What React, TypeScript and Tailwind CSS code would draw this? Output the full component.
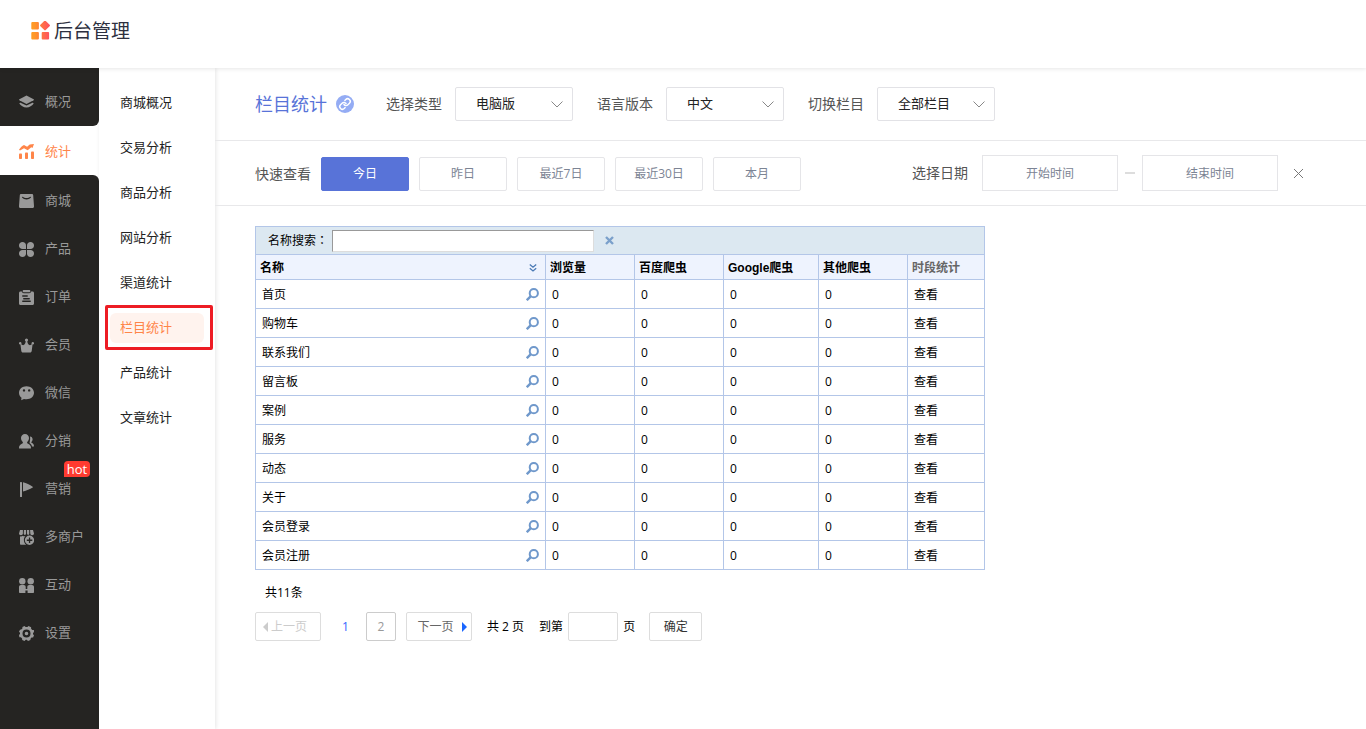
import { useState } from "react";
import type { ReactNode } from "react";

interface Column {
    label: string,
    className: string
}

const iconClass: string = "w-[15px] h-[15px] shrink-0";

const Icon = ({ children }: { children: ReactNode }) => (
    <svg className={iconClass} viewBox="0 0 15 15" fill="currentColor" aria-hidden="true">{children}</svg>
);

const icons: Record<string, ReactNode> = {
    概况: <>
        <path d="M7.5.5 14.600 4.200c.5.300.5.800 0 1.100L7.500 9 .4 5.300c-.5-.3-.5-.8 0-1.100z" />
        <path d="M.8 7.900c.4-.3.800-.2 1.200 0l5.500 2.600L13 7.900c.4-.2.800-.3 1.200 0 .4.300.5.800.1 1.200-1.300 1.600-3.600 3.500-6.800 3.500S2 10.700.7 9.100c-.4-.4-.3-.9.1-1.200z" />
    </>,
    统计: <>
        <path d="M0 5.800C1.500 3.700 3.200 1.900 5 1.100l3.100 1.700L10.700.4l4.300-.3-1.500 3.900-1.200-.7-3.600 3-3.700-2L1 6.400z" />
        <rect x="0" y="9.600" width="3" height="5.400" rx=".8" />
        <rect x="6" y="8.600" width="3" height="6.400" rx=".8" />
        <rect x="12" y="7.600" width="3" height="7.400" rx=".8" />
    </>,
    商城: <path fillRule="evenodd" d="M2.200 0h10.600c.8 0 1.300.5 1.400 1.200L15 12c.1 1.100-.6 2-1.800 2H1.800C.6 14-.1 13.100 0 12L.8 1.200C.9.500 1.400 0 2.200 0zM3.600 2.700c-.6-.1-.8.5-.5.900 1 1.300 2.600 2 4.400 2s3.400-.7 4.400-2c.3-.4.1-1-.5-.9-1.200.7-2.500 1.400-3.900 1.400S4.800 3.400 3.600 2.700z" />,
    产品: <>
        <path d="M3.500 0C5.500 0 7 1.500 7 3.500V7H3.500C1.500 7 0 5.500 0 3.500S1.500 0 3.500 0z" />
        <path d="M11.500 0C13.500 0 15 1.500 15 3.500S13.500 7 11.500 7H8V3.500C8 1.500 9.500 0 11.500 0z" />
        <path d="M3.500 8H7v3.500C7 13.500 5.500 15 3.500 15S0 13.500 0 11.500 1.500 8 3.500 8z" />
        <path d="M8 8h3.500c2 0 3.500 1.500 3.500 3.500S13.500 15 11.500 15 8 13.500 8 11.500z" />
    </>,
    订单: <>
        <path d="M4.500 0h6c.5 0 .8.300.8.800v.7c0 .5-.3.800-.8.800h-6c-.5 0-.8-.3-.8-.8V.8c0-.5.3-.8.800-.8z" />
        <path fillRule="evenodd" d="M1.500 1.500H3c.1 1.200.7 1.700 1.800 1.700h5.400c1.100 0 1.700-.5 1.800-1.700h1.500c.9 0 1.500.6 1.500 1.500v10.500c0 .9-.6 1.500-1.500 1.500h-12C.6 15 0 14.400 0 13.500V3c0-.9.6-1.500 1.500-1.500zM3.700 5.300c-.8 0-.8 1.500 0 1.500h4.600c.8 0 .8-1.500 0-1.500zm1 2.700c-.8 0-.8 1.400 0 1.400h5.600c.8 0 .8-1.400 0-1.400zm-1 2.600c-.8 0-.8 1.500 0 1.500h7.600c.8 0 .8-1.500 0-1.500z" />
    </>,
    会员: <>
        <circle cx="7.5" cy="2" r="1.600" />
        <circle cx="1.200" cy="5.200" r="1.200" />
        <circle cx="13.800" cy="5.200" r="1.200" />
        <path d="M1.300 5.200c1.300 1.400 2.400 2.200 3.300 1.900C5.800 6.700 6.600 4.800 6.900 3h1.200c.3 1.800 1.100 3.700 2.300 4.100.9.300 2-.5 3.300-1.900l-1 7.800c-.1.900-.7 1.500-1.600 1.500H3.900c-.9 0-1.500-.6-1.600-1.500z" />
    </>,
    微信: <path fillRule="evenodd" d="M7.500.3c4.200 0 7.500 2.800 7.500 6.500s-3.300 6.500-7.500 6.500c-.9 0-1.700-.1-2.500-.3l-2.800 1.300.3-2.500C.9 10.600 0 8.800 0 6.800 0 3.100 3.300.3 7.500.3zM5 3.200a1.200 1.200 0 1 0 0 2.400 1.200 1.200 0 0 0 0-2.400zm5.200 0a1.200 1.200 0 1 0 0 2.400 1.200 1.200 0 0 0 0-2.400z" />,
    分销: <>
        <path d="M6 0c2.300 0 4 1.800 4 4.100 0 1.700-.8 3-1.800 3.900-.3.800.1 1.300.9 1.700 1.900.9 2.900 2.200 2.900 4.300 0 .4-.2.600-.6.600H.6c-.4 0-.6-.2-.6-.6 0-2.100 1-3.400 2.900-4.300.8-.4 1.200-.9.900-1.700C2.800 7.100 2 5.800 2 4.100 2 1.800 3.700 0 6 0z" />
        <path d="M11 2.500c1.500.1 2.600 1.300 2.600 2.800 0 1.200-.5 2-1.100 2.600-.3.600 0 .9.500 1.200 1.300.7 2 1.700 2 3.300h-2c-.4-1.500-1.200-2.500-2.500-3.300C10.800 7.300 11.500 5 11 2.500z" />
    </>,
    营销: <>
        <rect x="1" y="0" width="2" height="15" rx=".5" />
        <path d="M4 .3c3.300.7 6.700 2.400 9.700 4.400.4.300.4.700 0 .9-3 1.600-6 3-9.700 4z" />
    </>,
    多商户: <>
        <path d="M1 0h2.900v3.400c0 2.300-3.900 2.300-3.900 0zM4.900 0h2.200v3.600c0 1.700-2.400 1.700-2.400 0zM8 0h2.200l.1 3.600c0 1.700-2.300 1.700-2.300 0zM11.100 0H14l1 3.400c0 2.300-3.700 2.300-3.700 0z" />
        <path d="M1 6.300c1 .4 2 .1 2.800-.6.7.7 1.700.8 2.600.4C5.300 7.300 4.800 8.700 4.900 10.200c.1 1.900 1 3.600 2.400 4.600H1.800c-.5 0-.8-.3-.8-.8z" />
        <path fillRule="evenodd" d="M10.500 5.600a4.600 4.600 0 1 1 0 9.300 4.600 4.600 0 0 1 0-9.300zM9.900 7.600v2H7.800v1.300h2.100V13h1.300v-2.100h2.100V9.600h-2.100v-2z" />
    </>,
    互动: <>
        <circle cx="3.300" cy="3.200" r="3.200" />
        <circle cx="11.700" cy="3.200" r="3.200" />
        <path d="M2 7h2.700c1.400 0 2 .9 2 2.100H5.600V15H.8c-.5 0-.8-.3-.8-.8V9c0-1.200.8-2 2-2zM10.300 7H13c1.200 0 2 .8 2 2v5.200c0 .5-.3.800-.8.800H9.400V9.100H8.300c0-1.200.6-2.100 2-2.100z" />
        <path d="M5 9h1.700v2h1.600V9H10v6H8.600v-2.400H6.400V15H5z" />
    </>,
    设置: <path fillRule="evenodd" d="m5.500.1 1.100 1h1.800l1.100-1 2.600 1.100v1.500l1.200 1.200 1.600.1L15 6l-1 1v1.200l1 1-.9 2.300-1.600.1-1 1.200-.1 1.300-2.400.9-1.200-1.200H6.700L5.500 15l-2.300-1-.1-1.500-1.200-1.200-1.500-.1L0 9l1-1V6.800L0 5.700l1-2 1.200-.1 1.200-1.200V1zM7.500 3.500a4 4 0 1 0 0 8 4 4 0 0 0 0-8zm0 2.200a1.800 1.800 0 1 1 0 3.600 1.800 1.800 0 0 1 0-3.600z" />,
};

const mainMenu: string[] = ["商城", "产品", "订单", "会员", "微信", "分销", "营销", "多商户", "互动", "设置"];
const subMenu: string[] = ["商城概况", "交易分析", "商品分析", "网站分析", "渠道统计", "栏目统计", "产品统计", "文章统计"];
const ranges: string[] = ["今日", "昨日", "最近7日", "最近30日", "本月"];
const rows: string[] = ["首页", "购物车", "联系我们", "留言板", "案例", "服务", "动态", "关于", "会员登录", "会员注册"];
const columns: Column[] = [
    { label: "浏览量", className: "w-[89px]" },
    { label: "百度爬虫", className: "w-[89px]" },
    { label: "Google爬虫", className: "w-[95px]" },
    { label: "其他爬虫", className: "w-[89px]" },
];

const MenuLink = ({ name, hot }: { name: string, hot?: boolean }) => (
    <a href="#" className="relative flex items-center gap-[11px] h-12 pl-[19px] text-[13px] text-[#999] hover:text-white">
        <Icon>{icons[name]}</Icon>
        {name}
        {hot && <span className="absolute left-16 -top-1 h-4 w-[26px] rounded-t-sm rounded-br-sm bg-[#ff3b30] text-center text-[13px] leading-4 font-medium text-white">hot</span>}
    </a>
);

const FilterSelect = ({ id, label, options }: { id: string, label: string, options: string[] }) => (
    <div className="flex items-center gap-[13px]">
        <label htmlFor={id} className="text-sm text-[#555]">{label}</label>
        <div className="relative">
            <select id={id} className="block w-[118px] h-[34px] appearance-none rounded-xs border border-[#e2e2e6] bg-white pl-5 text-[13px] text-[#222] outline-none">
                {options.map(o => <option key={o}>{o}</option>)}
            </select>
            <svg className="absolute right-2.5 top-3.5 w-3 h-[7px] pointer-events-none" viewBox="0 0 12 7" fill="none" stroke="#888">
                <path d="m.5.5 5.500 5.500L11.500.5" />
            </svg>
        </div>
    </div>
);

const App = () => {

    const cell: string = "border border-[#b3c6e8] px-1.5 pt-0.5";
    const headCell: string = "border border-[#b3c6e8] px-1 pt-0.5 text-left";
    const rangeButton: string = "w-[88px] h-[34px] rounded-xs border border-[#e5e5e8] text-xs text-[#7c8494] cursor-pointer";
    const activeRangeButton: string = "w-[88px] h-[34px] rounded-xs border border-[#5873d8] bg-[#5873d8] text-xs text-white cursor-pointer";
    const dateInput: string = "w-[136px] h-9 border border-[#e5e5e8] text-center text-xs outline-none placeholder:text-[#7c8494]";
    const pageButton: string = "flex items-center justify-center h-[29px] w-[66px] rounded-xs border border-[#ddd] text-xs";

    const [range, setRange] = useState<string>("今日");
    const [keyword, setKeyword] = useState<string>("");
    const [page, setPage] = useState<string>("");

    return (
        <div className="flex flex-col min-h-screen bg-white font-['Open_Sans','Noto_Sans_CJK_SC',sans-serif] text-black">
            <header className="relative z-10 flex items-center gap-1 h-[68px] pl-[30px] pb-1.5 bg-white shadow-[0_1px_4px_rgba(0,0,0,0.1)]">
                <svg className="w-5 h-5" viewBox="0 0 20 20" aria-hidden="true">
                    <defs>
                        <linearGradient id="logo" gradientUnits="userSpaceOnUse" x1="0" y1="0" x2="20" y2="0">
                            <stop offset="0.2" stopColor="#ff9a26" />
                            <stop offset="1" stopColor="#ff4d62" />
                        </linearGradient>
                    </defs>
                    <g fill="url(#logo)">
                        <rect x="1.300" y="1" width="7.600" height="7.400" rx="1" />
                        <rect x="1.300" y="11" width="7.600" height="7.400" rx="1" />
                        <rect x="11.700" y="11" width="7.400" height="7.400" rx="1" />
                        <path d="M14.300-.1l-3.900 3.900c-.5.500-.5.900 0 1.400l3.900 3.900c.5.500.9.500 1.400 0l3.900-3.900c.5-.5.500-.9 0-1.400L15.700-.1c-.5-.5-.9-.5-1.400 0z" />
                    </g>
                </svg>
                <h1 className="text-[19px] text-[#2d3040]">后台管理</h1>
            </header>

            <div className="flex flex-1">
                <nav className="flex flex-col w-[99px] shrink-0">
                    <div className="pt-2.5 bg-[#252422] rounded-br-md">
                        <MenuLink name="概况" />
                    </div>
                    <a href="#" className="flex items-center gap-[11px] h-[49px] pt-0.5 pl-[19px] text-[13px] text-[#ff8549]">
                        <Icon>{icons["统计"]}</Icon>
                        统计
                    </a>
                    <div className="flex-1 pt-0.5 bg-[#252422] rounded-tr-md">
                        {mainMenu.map(name => <MenuLink key={name} name={name} hot={name === "营销"} />)}
                    </div>
                </nav>

                <nav className="w-[116px] shrink-0 pt-3 pl-1.5 pr-0.5 shadow-[1px_0_4px_rgba(0,0,0,0.1)]">
                    {subMenu.map(name => (
                        name === "栏目统计" ?
                            <a key={name} href="#" className="flex items-center h-[45px] border-3 border-[#ed1c24] rounded-xs pl-0.5 pr-1.5 text-[13px] text-[#ff8549]">
                                <span className="flex items-center flex-1 h-[30px] rounded-md bg-[#fff3ee] pl-2.5">{name}</span>
                            </a>
                            :
                            <a key={name} href="#" className="flex items-center h-[45px] pl-[15px] text-[13px] text-[#222]">{name}</a>
                    ))}
                </nav>

                <main className="flex-1 min-w-0">
                    <div className="flex items-center h-[73px] pl-10 border-b border-[#e8e8ea]">
                        <h2 className="text-lg text-[#5873d8]">栏目统计</h2>
                        <svg className="w-[18px] h-[18px] ml-[9px] mr-8" viewBox="0 0 18 18" fill="none" aria-hidden="true">
                            <circle cx="9" cy="9" r="9" fill="#94acf4" />
                            <g transform="translate(2.7 2.700) scale(.525)" stroke="#fff" strokeWidth="2.800" strokeLinecap="round" strokeLinejoin="round">
                                <path d="M10 13a5 5 0 0 0 7.540.54l3-3a5 5 0 0 0-7.070-7.070l-1.720 1.710" />
                                <path d="M14 11a5 5 0 0 0-7.540-.54l-3 3a5 5 0 0 0 7.070 7.070l1.710-1.710" />
                            </g>
                        </svg>
                        <div className="flex gap-6">
                            <FilterSelect id="type" label="选择类型" options={["电脑版", "手机版"]} />
                            <FilterSelect id="lang" label="语言版本" options={["中文", "英文"]} />
                            <FilterSelect id="column" label="切换栏目" options={["全部栏目"]} />
                        </div>
                    </div>

                    <div className="flex items-center justify-between h-[65px] pl-10 pr-[62px] border-b border-[#e8e8ea]">
                        <div className="flex items-center gap-2.5 pt-0.5">
                            <span className="text-sm text-[#555]">快速查看</span>
                            {ranges.map(r => (
                                <button key={r} type="button" onClick={() => setRange(r)} className={r === range ? activeRangeButton : rangeButton}>{r}</button>
                            ))}
                        </div>
                        <div className="flex items-center">
                            <label htmlFor="start" className="mr-[14px] text-sm text-[#555]">选择日期</label>
                            <input id="start" type="text" placeholder="开始时间" className={dateInput} />
                            <span className="w-2.5 h-0.5 mx-[7px] bg-[#ddd]"></span>
                            <input id="end" type="text" placeholder="结束时间" aria-label="结束时间" className={dateInput} />
                            <button type="button" aria-label="清除日期" className="ml-[15px] cursor-pointer">
                                <svg className="w-[11px] h-[11px]" viewBox="0 0 11 11" stroke="#777">
                                    <path d="m1 1 9 9M10 1l-9 9" />
                                </svg>
                            </button>
                        </div>
                    </div>

                    <div className="pl-10 pt-5 text-xs">
                        <table className="w-[730px] table-fixed border-collapse">
                            <colgroup>
                                <col />
                                {columns.map(c => <col key={c.label} className={c.className} />)}
                                <col className="w-[77px]" />
                            </colgroup>
                            <thead>
                                <tr className="h-7 bg-[#dce8f1]">
                                    <td colSpan={6} className="border border-[#b3c6e8] pl-3">
                                        <div className="flex items-center">
                                            <label htmlFor="keyword" className="w-16">名称搜索<span className="font-['Noto_Sans_CJK_TC',sans-serif]" lang="zh-TW">：</span></label>
                                            <input id="keyword" value={keyword} onChange={e => setKeyword(e.target.value)}
                                                className="w-[262px] h-[22px] border border-t-[#999] border-l-[#999] border-r-[#ddd] border-b-[#ddd] bg-white px-1 outline-none" />
                                            <button type="button" aria-label="清空" onClick={() => setKeyword("")} className="ml-[11px] cursor-pointer">
                                                <svg className="w-[9px] h-[9px]" viewBox="0 0 9 9" stroke="#7ba0cb" strokeWidth="2.400">
                                                    <path d="m1 1 7 7M8 1 1 8" />
                                                </svg>
                                            </button>
                                        </div>
                                    </td>
                                </tr>
                                <tr className="h-[25px] bg-[#eef3fe] font-['Liberation_Sans','Noto_Sans_CJK_SC',sans-serif]">
                                    <th className={headCell}>
                                        <div className="flex items-center justify-between pr-1">
                                            名称
                                            <svg className="w-2 h-2" viewBox="0 0 8 8" fill="none" stroke="#4a7ab5" strokeWidth="1.300">
                                                <path d="m.8.500 3.200 2.700L7.200.5M.8 4.300 4 7l3.200-2.700" />
                                            </svg>
                                        </div>
                                    </th>
                                    {columns.map(c => <th key={c.label} className={headCell}>{c.label}</th>)}
                                    <th className={`${headCell} text-[#666]`}>时段统计</th>
                                </tr>
                            </thead>
                            <tbody>
                                {rows.map(name => (
                                    <tr key={name} className="h-[29px]">
                                        <td className={cell}>
                                            <div className="flex items-center justify-between">
                                                {name}
                                                <button type="button" aria-label="查看趋势" className="pb-0.5 cursor-pointer">
                                                    <svg className="w-[13px] h-[13px]" viewBox="0 0 13 13" fill="none" stroke="#6f98cb">
                                                        <circle cx="7.800" cy="5.200" r="4.100" strokeWidth="2" />
                                                        <path d="M4.800 8.200.8 12.200" strokeWidth="2.400" />
                                                    </svg>
                                                </button>
                                            </div>
                                        </td>
                                        {columns.map(c => <td key={c.label} className={cell}>0</td>)}
                                        <td className={cell}><a href="#">查看</a></td>
                                    </tr>
                                ))}
                            </tbody>
                        </table>

                        <p className="mt-3.5 pl-2.5 leading-[18px]">共11条</p>
                        <div className="flex items-center mt-2.5">
                            <button type="button" disabled className={`${pageButton} gap-[3px] pr-1.5 text-[#ccc]`}>
                                <svg className="w-[5px] h-2.5" viewBox="0 0 5 10" fill="currentColor"><path d="M5 0v10L0 5z" /></svg>
                                上一页
                            </button>
                            <span className="w-[45px] pl-1 text-center text-[#3366ff]">1</span>
                            <button type="button" className="w-[30px] h-[29px] rounded-xs border border-[#ccc] text-[#999] cursor-pointer">2</button>
                            <button type="button" className={`${pageButton} ml-2.5 gap-2 pl-1.5 text-[#666] cursor-pointer`}>
                                下一页
                                <svg className="w-[5px] h-2.5 text-[#1a66ff]" viewBox="0 0 5 10" fill="currentColor"><path d="M0 0v10l5-5z" /></svg>
                            </button>
                            <span className="ml-[15px]">共 2 页</span>
                            <label htmlFor="page" className="ml-[15px]">到第</label>
                            <input id="page" value={page} onChange={e => setPage(e.target.value)} className="w-[50px] h-[29px] mx-[5px] rounded-xs border border-[#ddd] text-center outline-none" />
                            <span>页</span>
                            <button type="button" className="w-[53px] h-[29px] ml-[14px] rounded-xs border border-[#ddd] text-[#333] cursor-pointer">确定</button>
                        </div>
                    </div>
                </main>
            </div>
        </div>
    )
}

export default App
